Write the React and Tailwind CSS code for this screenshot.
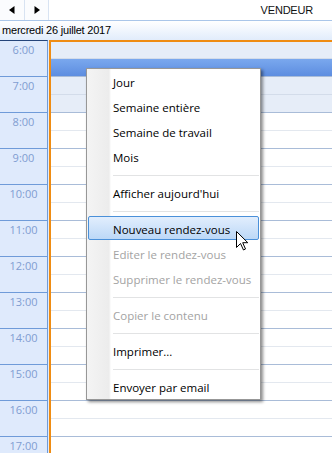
import React from "react";

const hours = [6, 7, 8, 9, 10, 11, 12, 13, 14, 15, 16, 17];

function Slot({ idx }) {
  const hourLine = idx % 2 === 1;
  const off = idx < 4;
  const sel = idx === 1;
  let cls = "shrink-0 border-b ";
  cls += idx === 0 ? "h-[17px] " : "h-[18px] ";
  if (sel) cls += "bg-gradient-to-b from-[#7aa8ee] to-[#5d8de0] ";
  else if (off) cls += "bg-[#e6edf8] ";
  else cls += "bg-white ";
  if (hourLine) cls += "border-[#a9bcd8]";
  else if (off) cls += "border-[#d3dcea]";
  else cls += "border-[#e3e8ef]";
  return <div className={cls} />;
}

function Item({ children, disabled }) {
  return (
    <div
      className={
        "h-[25px] pl-[26px] leading-[27px] whitespace-nowrap " +
        (disabled ? "text-[#a3a3a3]" : "text-black")
      }
    >
      {children}
    </div>
  );
}

function Sep() {
  return (
    <div className="h-[11px] pt-[6px] pl-[26px] pr-[1px]">
      <div className="h-[1px] bg-[#e2e3e4]" />
    </div>
  );
}

export default function App() {
  const slots = [];
  for (let i = 0; i < 24; i++) slots.push(<Slot key={i} idx={i} />);
  return (
    <div className="relative w-[332px] h-[453px] overflow-hidden bg-white font-['Liberation_Sans',sans-serif]">
      {/* top bar */}
      <div className="h-[21px] flex border-b border-[#aac6e9]">
        <div className="w-[25px] h-[20px] border-r border-[#d8e3f2] bg-[#fbfcfe] flex items-center justify-center">
          <svg width="6" height="8" viewBox="0 0 6 8">
            <path d="M5.5 0 L5.5 8 L0 4 Z" fill="#000" />
          </svg>
        </div>
        <div className="w-[24px] h-[20px] border-r border-[#d8e3f2] bg-[#fbfcfe] flex items-center justify-center">
          <svg width="6" height="8" viewBox="0 0 6 8">
            <path d="M0.5 0 L0.5 8 L6 4 Z" fill="#000" />
          </svg>
        </div>
        <div className="ml-auto mr-[19px] text-[11px] leading-[20px] tracking-[-0.2px] text-[#111]">
          VENDEUR
        </div>
      </div>
      {/* date row */}
      <div className="h-[19px] pl-[2px] text-[11px] leading-[19px] tracking-[-0.2px] text-black bg-gradient-to-b from-white to-[#e1ecfb]">
        mercredi 26 juillet 2017
      </div>
      {/* body */}
      <div className="flex">
        <div className="w-[48px] shrink-0 bg-[#dfeafc] border-r border-[#6f9bd9] border-t border-t-[#25457a]">
          {hours.map((h) => (
            <div
              key={h}
              className="h-[36px] border-b border-[#6f9bd9] text-center pt-[1px] text-[11px] leading-[15px] text-[#7f9dd1] font-['Open_Sans',sans-serif]"
            >
              {h}:00
            </div>
          ))}
        </div>
        <div className="w-[1px] shrink-0 bg-[#e4ecf8]" />
        <div className="flex-1 flex flex-col border-l-2 border-t-2 border-[#ef8c13]">
          {slots}
        </div>
      </div>

      {/* context menu */}
      <div className="absolute left-[86px] top-[68px] w-[175px] border border-[#979797] shadow-[2px_2px_3px_rgba(0,0,0,0.45)] bg-[linear-gradient(to_right,#f4f4f4_0px,#ececec_22px,#ffffff_24px)] font-['Open_Sans',sans-serif] text-[11.5px]">
        <Item>Jour</Item>
        <Item>Semaine entière</Item>
        <Item>Semaine de travail</Item>
        <Item>Mois</Item>
        <Sep />
        <Item>Afficher aujourd'hui</Item>
        <Sep />
        <div className="h-[25px] pr-[1px] pl-[1px] pb-[1px]">
          <div className="h-[24px] rounded-[2px] border border-[#4a90d9] bg-gradient-to-b from-[#e2eefd] to-[#bcd8f7] pl-[24px] leading-[25px] text-black whitespace-nowrap">
            Nouveau rendez-vous
          </div>
        </div>
        <Item disabled>Editer le rendez-vous</Item>
        <Item disabled>Supprimer le rendez-vous</Item>
        <Sep />
        <Item disabled>Copier le contenu</Item>
        <Sep />
        <Item>Imprimer...</Item>
        <Sep />
        <Item>Envoyer par email</Item>
      </div>

      {/* mouse cursor */}
      <svg
        className="absolute left-[236px] top-[231px]"
        width="14"
        height="21"
        viewBox="0 0 14 21"
      >
        <path
          d="M0.5 0.5 L0.5 16.5 L4.5 12.5 L7.5 19 L9.5 18 L6.7 11.7 L11.8 11.7 Z"
          fill="#fff"
          stroke="#000"
          strokeWidth="1"
          strokeLinejoin="miter"
        />
      </svg>
    </div>
  );
}
